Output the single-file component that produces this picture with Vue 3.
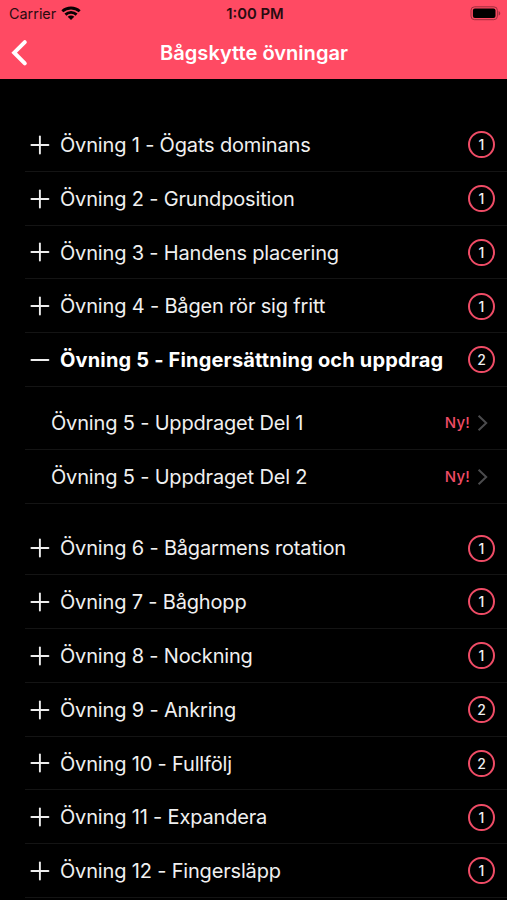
<script setup>
const sections = [
  { title: 'Övning 1 - Ögats dominans', count: 1 },
  { title: 'Övning 2 - Grundposition', count: 1 },
  { title: 'Övning 3 - Handens placering', count: 1 },
  { title: 'Övning 4 - Bågen rör sig fritt', count: 1 },
  {
    title: 'Övning 5 - Fingersättning och uppdrag',
    count: 2,
    children: ['Övning 5 - Uppdraget Del 1', 'Övning 5 - Uppdraget Del 2'],
  },
  { title: 'Övning 6 - Bågarmens rotation', count: 1 },
  { title: 'Övning 7 - Båghopp', count: 1 },
  { title: 'Övning 8 - Nockning', count: 1 },
  { title: 'Övning 9 - Ankring', count: 2 },
  { title: 'Övning 10 - Fullfölj', count: 2 },
  { title: 'Övning 11 - Expandera', count: 1 },
  { title: 'Övning 12 - Fingersläpp', count: 1 },
]
</script>

<template>
  <div class="screen">
    <header class="header">
      <div class="status">
        <div class="carrier">
          <span>Carrier</span>
          <svg class="wifi" width="20" height="15" viewBox="0 0 20 15">
            <path d="M1.3 5.3C6.2 .9 13.8 .9 18.7 5.3" />
            <path d="M4.4 8.6C7.6 5.7 12.4 5.7 15.6 8.6" />
            <path class="dot" d="M10 14L6.7 10.7C8.6 9.1 11.4 9.1 13.3 10.7Z" />
          </svg>
        </div>
        <span class="time">1:00 PM</span>
        <svg class="battery" width="31" height="15" viewBox="0 0 31 15">
          <rect class="shell" x="1" y="0.8" width="26.4" height="12.9" rx="3.6" />
          <rect x="2.9" y="2.6" width="22.6" height="9.3" rx="2" />
          <path class="cap" d="M28.6 4.9C30.8 5.8 30.8 8.7 28.6 9.6Z" />
        </svg>
      </div>
      <div class="nav">
        <svg class="back" width="18" height="28" viewBox="0 0 18 28">
          <path d="M14.8 3.1L4.2 13.7L14.8 24.3" />
        </svg>
        <h1>Bågskytte övningar</h1>
      </div>
    </header>
    <main class="list">
      <template v-for="s in sections" :key="s.title">
        <div class="row" :class="{ open: s.children }">
          <svg class="toggle" width="20" height="20" viewBox="0 0 20 20">
            <path d="M1.4 10H18.4" />
            <path v-if="!s.children" d="M9.9 1.5V18.5" />
          </svg>
          <span class="title">{{ s.title }}</span>
          <span class="count">{{ s.count }}</span>
        </div>
        <div v-if="s.children" class="children">
          <div v-for="c in s.children" :key="c" class="row child">
            <span class="title">{{ c }}</span>
            <span class="new">Ny!</span>
            <svg class="chevron" width="12" height="18" viewBox="0 0 12 18">
              <path d="M1.6 1.8L9.2 9L1.6 16.2" />
            </svg>
          </div>
        </div>
      </template>
    </main>
  </div>
</template>

<style>
body { margin: 0; background: #000; }
</style>

<style scoped>
.screen {
  width: 507px;
  height: 900px;
  overflow: hidden;
  background: #000;
  color: #f0f0f0;
  font-family: Inter, "Liberation Sans", sans-serif;
}
.header {
  box-sizing: border-box;
  height: 78.6px;
  background: #ff4a63;
}
.status {
  display: grid;
  grid-template-columns: 1fr auto 1fr;
  align-items: center;
  height: 27px;
  padding: 0 6px 0 9px;
  color: #2a0c10;
  font-size: 14.4px;
}
.carrier { display: flex; align-items: center; gap: 5px; }
.wifi { fill: none; stroke: #080203; stroke-width: 2.8; }
.wifi .dot { fill: #080203; stroke: none; }
.time { font-size: 14.8px; font-weight: 600; }
.battery { justify-self: end; fill: #000; }
.battery .shell { fill: none; stroke: #9e2e3e; stroke-width: 1; }
.battery .cap { fill: #9e2e3e; }
.nav {
  display: grid;
  grid-template-columns: 1fr auto 1fr;
  align-items: center;
  height: 51px;
  padding: 0 9px 0 10px;
}
.back { fill: none; stroke: #fff; stroke-width: 4; stroke-linecap: round; stroke-linejoin: miter; }
h1 { margin: 0; color: #fff; font-size: 20.1px; font-weight: 600; line-height: 24px; }
.list { padding: 39.5px 0 0 25px; }
.row {
  display: flex;
  align-items: center;
  box-sizing: border-box;
  height: 53.8px;
  padding: 0.6px 12.3px 0 5px;
  border-bottom: 1px solid #141414;
}
.toggle { margin-right: 10px; fill: none; stroke: #eee; stroke-width: 1.9; stroke-linecap: round; }
.title {
  flex: 1;
  padding-top: 0.4px;
  font-size: 20px;
  line-height: 26px;
  letter-spacing: -0.17px;
  white-space: nowrap;
}
.open .title { color: #fff; font-weight: 700; letter-spacing: 0.17px; }
.count {
  display: flex;
  align-items: center;
  justify-content: center;
  box-sizing: border-box;
  width: 26.4px;
  height: 27px;
  border: 2px solid #ef4c66;
  border-radius: 50%;
  font-size: 14px;
  font-weight: 500;
}
.children { padding: 9px 0 17.8px; }
.child { padding: 0.8px 18px 0 26px; }
.new { margin-right: 7px; color: #ef4c66; font-size: 15px; font-weight: 500; letter-spacing: 0.2px; }
.chevron { fill: none; stroke: #4b4b4d; stroke-width: 2; }
</style>
